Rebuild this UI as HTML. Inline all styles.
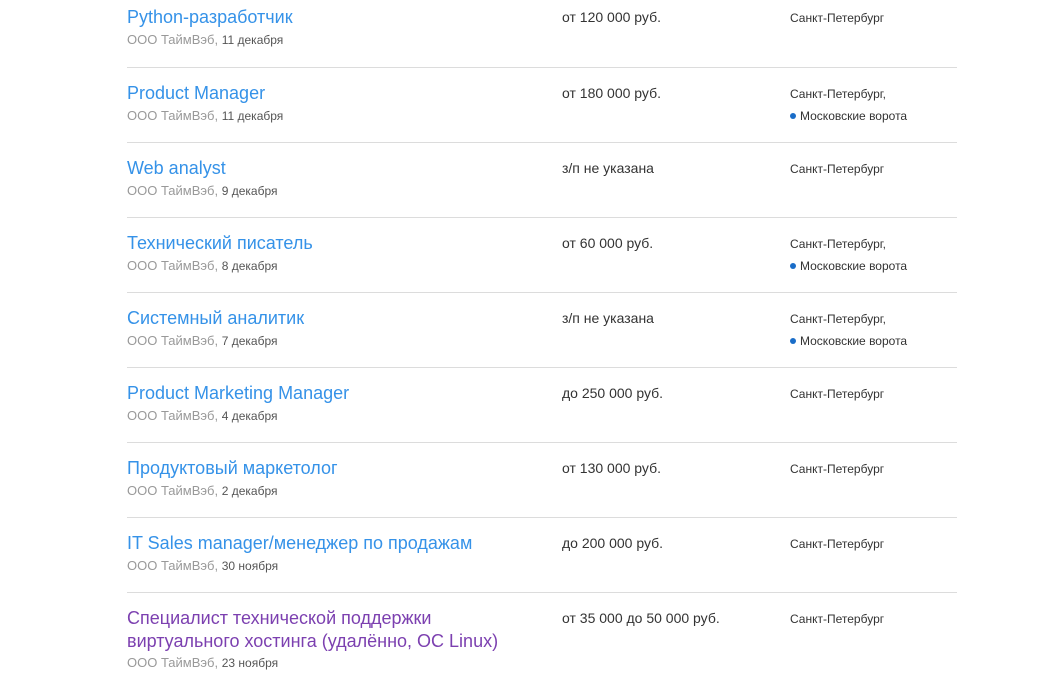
<!DOCTYPE html>
<html><head><meta charset="utf-8"><style>
body{margin:0;width:1049px;height:679px;background:#fff;overflow:hidden;font-family:"Liberation Sans",Arial,sans-serif;position:relative}
.r{position:absolute;left:127px;width:830px;height:75px;border-top:1px solid #dcdcdc}
.r.f{border-top:none}
.t{position:absolute;left:0;top:14px;font-size:18px;line-height:23px;color:#3592e8;width:400px}
.t.v{color:#7c40b0}
.c{position:absolute;left:0;top:39px;font-size:13px;line-height:18px;color:#999}
.c span{color:#555;font-size:12px}
.s{position:absolute;left:435px;top:16px;font-size:14px;line-height:18px;color:#333}
.l{position:absolute;left:663px;top:15px;font-size:12px;line-height:22px;color:#333}
.d{display:inline-block;width:6px;height:6px;border-radius:50%;background:#1a6dc8;margin-right:4px;vertical-align:1px}
</style></head><body>
<div class="r f" style="top:-8px"><div class="t">Python-разработчик</div><div class="c">ООО ТаймВэб, <span>11 декабря</span></div><div class="s">от 120 000 руб.</div><div class="l">Санкт-Петербург</div></div>
<div class="r" style="top:67px"><div class="t">Product Manager</div><div class="c">ООО ТаймВэб, <span>11 декабря</span></div><div class="s">от 180 000 руб.</div><div class="l">Санкт-Петербург,<br><i class="d"></i>Московские ворота</div></div>
<div class="r" style="top:142px"><div class="t">Web analyst</div><div class="c">ООО ТаймВэб, <span>9 декабря</span></div><div class="s">з/п не указана</div><div class="l">Санкт-Петербург</div></div>
<div class="r" style="top:217px"><div class="t">Технический писатель</div><div class="c">ООО ТаймВэб, <span>8 декабря</span></div><div class="s">от 60 000 руб.</div><div class="l">Санкт-Петербург,<br><i class="d"></i>Московские ворота</div></div>
<div class="r" style="top:292px"><div class="t">Системный аналитик</div><div class="c">ООО ТаймВэб, <span>7 декабря</span></div><div class="s">з/п не указана</div><div class="l">Санкт-Петербург,<br><i class="d"></i>Московские ворота</div></div>
<div class="r" style="top:367px"><div class="t">Product Marketing Manager</div><div class="c">ООО ТаймВэб, <span>4 декабря</span></div><div class="s">до 250 000 руб.</div><div class="l">Санкт-Петербург</div></div>
<div class="r" style="top:442px"><div class="t">Продуктовый маркетолог</div><div class="c">ООО ТаймВэб, <span>2 декабря</span></div><div class="s">от 130 000 руб.</div><div class="l">Санкт-Петербург</div></div>
<div class="r" style="top:517px"><div class="t">IT Sales manager/менеджер по продажам</div><div class="c">ООО ТаймВэб, <span>30 ноября</span></div><div class="s">до 200 000 руб.</div><div class="l">Санкт-Петербург</div></div>
<div class="r" style="top:592px;height:100px"><div class="t v">Специалист технической поддержки виртуального хостинга (удалённо, ОС Linux)</div><div class="c" style="top:61px">ООО ТаймВэб, <span>23 ноября</span></div><div class="s">от 35 000 до 50 000 руб.</div><div class="l">Санкт-Петербург</div></div>
</body></html>
